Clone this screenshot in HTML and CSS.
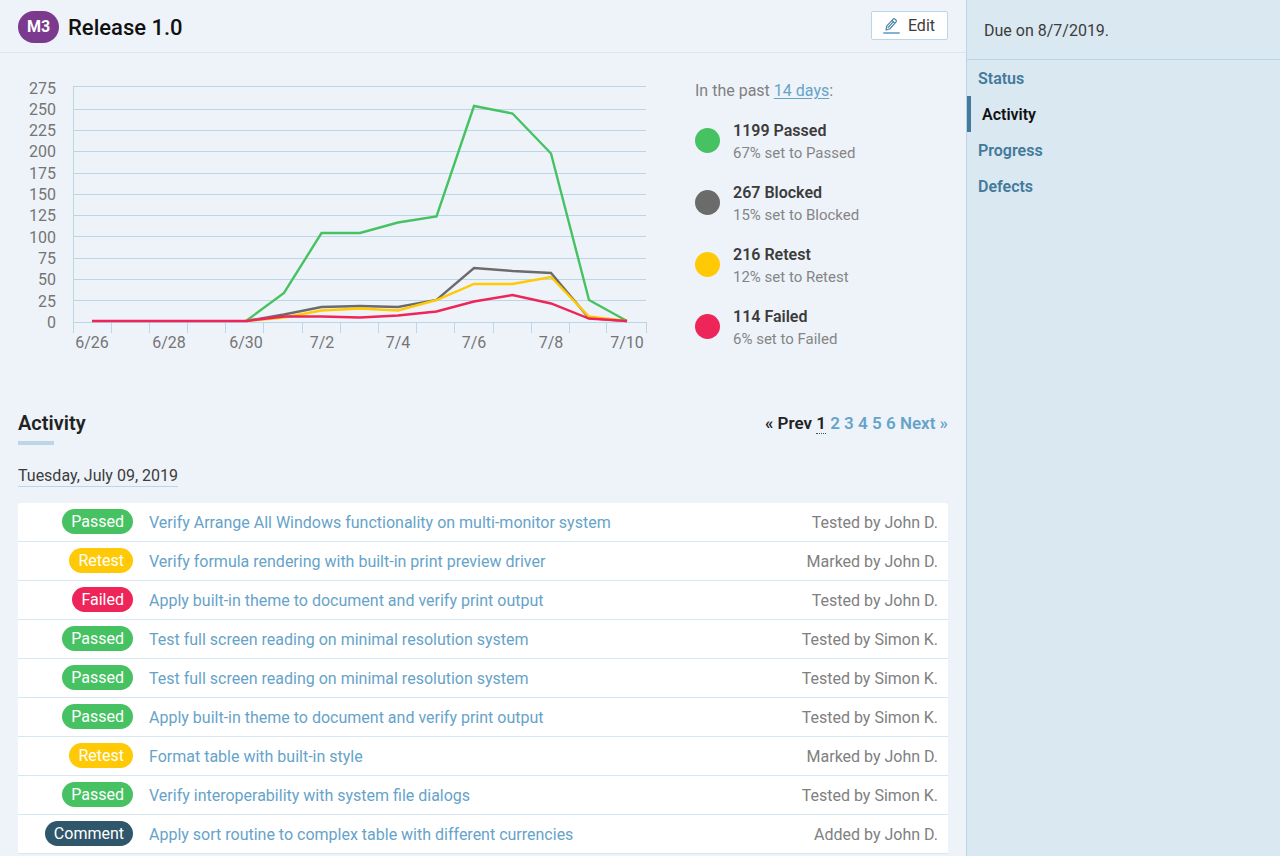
FILE: index.html
```html
<!DOCTYPE html>
<html lang="en">
<head>
<meta charset="utf-8">
<title>Release 1.0</title>
<link rel="stylesheet" href="styles.css">
</head>
<body>
<div class="page">
  <main class="main">
    <header class="topbar">
      <span class="milestone">M3</span>
      <h1 class="title">Release 1.0</h1>
      <button class="edit" type="button">
        <svg class="edit-icon" width="17" height="17" viewBox="0 0 17 17" fill="none" aria-hidden="true">
          <path d="M3.700 9.200 10.100 2.100c.5-.6 1.200-.6 1.700-.1l1.300 1.200c.5.5.5 1.100 0 1.700L6.700 12 3 13zM8.900 3.500l2.900 2.800M4.800 10.900 10 5.200" stroke="#4785ab" stroke-width="1.200" stroke-linejoin="round"/>
          <rect x="0" y="15" width="17" height="2" rx="1" fill="#84b3d2"/>
        </svg>
        Edit
      </button>
    </header>

    <section class="overview">
      <svg class="chart" viewBox="18 80 630 280" role="img" aria-label="Test results per day">
        <path class="grid" d="M73 86.500H646M73 109.500H646M73 130.500H646M73 151.500H646M73 173.500H646M73 194.500H646M73 215.500H646M73 236.500H646M73 258.500H646M73 279.500H646M73 300.500H646M73 322.500H647"/>
        <path class="grid" d="M73.500 86V333M111.500 322v11M149.500 322v11M187.500 322v11M225.500 322v11M263.500 322v11M302.500 322v11M340.500 322v11M378.500 322v11M416.500 322v11M454.500 322v11M493.500 322v11M531.500 322v11M569.500 322v11M606.500 322v11M646.500 322v11"/>
        <g class="y-labels">
          <text x="56" y="94">275</text><text x="56" y="115">250</text><text x="56" y="136">225</text><text x="56" y="157">200</text><text x="56" y="179">175</text><text x="56" y="200">150</text><text x="56" y="221">125</text><text x="56" y="243">100</text><text x="56" y="264">75</text><text x="56" y="285">50</text><text x="56" y="307">25</text><text x="56" y="328">0</text>
        </g>
        <g class="x-labels">
          <text x="92" y="348">6/26</text><text x="169" y="348">6/28</text><text x="246" y="348">6/30</text><text x="322" y="348">7/2</text><text x="398" y="348">7/4</text><text x="474" y="348">7/6</text><text x="551" y="348">7/8</text><text x="627" y="348">7/10</text>
        </g>
        <g class="series">
          <polyline stroke="#46c263" points="246,321 284,293 321.500,233 360,233 398,222.500 436.500,216.500 474,106 512.500,113.500 551,153.500 589,300 627,321"/>
          <polyline stroke="#6b6b6b" points="246,321 284,314.500 321.500,307 360,306 398,307 436.500,300 474,268 512.500,271 551,273 589,318 627,321"/>
          <polyline stroke="#ffca05" points="246,321 284,317.500 321.500,310.500 360,308.500 398,310.500 436.500,300 474,284 512.500,284 551,277 589,316.500 627,321"/>
          <polyline stroke="#ee2558" points="92,321 246,321 284,316.500 321.500,316.500 360,317.500 398,315.500 436.500,311.500 474,301.500 512.500,295 551,303.500 589,318.500 627,321"/>
        </g>
      </svg>
      <div class="legend">
        <p class="period">In the past <a href="#">14 days</a>:</p>
        <ul class="totals">
          <li class="total"><span class="dot passed"></span><div><strong>1199 Passed</strong><small>67% set to Passed</small></div></li>
          <li class="total"><span class="dot blocked"></span><div><strong>267 Blocked</strong><small>15% set to Blocked</small></div></li>
          <li class="total"><span class="dot retest"></span><div><strong>216 Retest</strong><small>12% set to Retest</small></div></li>
          <li class="total"><span class="dot failed"></span><div><strong>114 Failed</strong><small>6% set to Failed</small></div></li>
        </ul>
      </div>
    </section>

    <section class="activity">
      <div class="activity-head">
        <h2 class="heading">Activity</h2>
        <nav class="pager" aria-label="Pages">
          <span>« Prev</span> <span class="current">1</span> <a href="#">2</a> <a href="#">3</a> <a href="#">4</a> <a href="#">5</a> <a href="#">6</a> <a href="#">Next »</a>
        </nav>
      </div>
      <h3 class="day">Tuesday, July 09, 2019</h3>
      <table class="log">
        <tbody>
          <tr><td class="state"><span class="pill passed">Passed</span></td><td><a href="#">Verify Arrange All Windows functionality on multi-monitor system</a></td><td class="who">Tested by John D.</td></tr>
          <tr><td class="state"><span class="pill retest">Retest</span></td><td><a href="#">Verify formula rendering with built-in print preview driver</a></td><td class="who">Marked by John D.</td></tr>
          <tr><td class="state"><span class="pill failed">Failed</span></td><td><a href="#">Apply built-in theme to document and verify print output</a></td><td class="who">Tested by John D.</td></tr>
          <tr><td class="state"><span class="pill passed">Passed</span></td><td><a href="#">Test full screen reading on minimal resolution system</a></td><td class="who">Tested by Simon K.</td></tr>
          <tr><td class="state"><span class="pill passed">Passed</span></td><td><a href="#">Test full screen reading on minimal resolution system</a></td><td class="who">Tested by Simon K.</td></tr>
          <tr><td class="state"><span class="pill passed">Passed</span></td><td><a href="#">Apply built-in theme to document and verify print output</a></td><td class="who">Tested by Simon K.</td></tr>
          <tr><td class="state"><span class="pill retest">Retest</span></td><td><a href="#">Format table with built-in style</a></td><td class="who">Marked by John D.</td></tr>
          <tr><td class="state"><span class="pill passed">Passed</span></td><td><a href="#">Verify interoperability with system file dialogs</a></td><td class="who">Tested by Simon K.</td></tr>
          <tr><td class="state"><span class="pill comment">Comment</span></td><td><a href="#">Apply sort routine to complex table with different currencies</a></td><td class="who">Added by John D.</td></tr>
        </tbody>
      </table>
    </section>
  </main>

  <aside class="sidebar">
    <p class="due">Due on 8/7/2019.</p>
    <nav class="views" aria-label="Views">
      <a href="#">Status</a>
      <a class="active" href="#" aria-current="page">Activity</a>
      <a href="#">Progress</a>
      <a href="#">Defects</a>
    </nav>
  </aside>
</div>
</body>
</html>
```

FILE: styles.css
```css
* {
  box-sizing: border-box;
}

body {
  margin: 0;
  background: #eef3fa;
  color: #3c3c3c;
  font: 16px/20px Roboto, "Liberation Sans", sans-serif;
}

h1, h2, h3, p, ul {
  margin: 0;
  padding: 0;
}

a {
  color: #66a3c9;
  text-decoration: none;
}

.page {
  display: flex;
  min-height: 100vh;
}

.main {
  flex: 1;
  min-width: 0;
}

.topbar {
  display: flex;
  align-items: flex-start;
  gap: 9px;
  padding: 11px 18px 8px;
  border-bottom: 1px solid #d6e7f1;
}

.milestone {
  width: 41px;
  border-radius: 16px;
  background: #7b3a8e;
  color: #fff;
  font-weight: 700;
  line-height: 32px;
  text-align: center;
}

.title {
  flex: 1;
  color: #111;
  font-size: 22px;
  font-weight: 500;
  line-height: 33px;
}

.edit {
  display: flex;
  align-items: center;
  gap: 8px;
  height: 29px;
  padding: 0 12px 0 11px;
  border: 1px solid #bad6e7;
  border-radius: 2px;
  background: #fff;
  color: #3c3c3c;
  font: inherit;
}

.overview {
  display: flex;
  gap: 47px;
  padding: 27px 18px 0;
}

.chart {
  flex: 1;
  min-width: 0;
}

.grid {
  fill: none;
  stroke: #bad6e7;
}

.y-labels,
.x-labels {
  fill: #757575;
  font-size: 16px;
}

.y-labels {
  text-anchor: end;
}

.x-labels {
  text-anchor: middle;
}

.series {
  fill: none;
  stroke-width: 2.4;
}

.legend {
  flex: 0 0 253px;
  padding-top: 1px;
}

.period {
  color: #808080;
}

.period a {
  text-decoration: underline;
  text-underline-offset: 2px;
}

.totals {
  display: grid;
  gap: 18px;
  margin-top: 19px;
  list-style: none;
}

.total {
  display: flex;
  align-items: flex-start;
  gap: 13px;
}

.dot {
  width: 25px;
  height: 25px;
  margin-top: 8px;
  border-radius: 50%;
}

.total strong,
.total small {
  display: block;
  line-height: 22px;
}

.total strong {
  font-size: 16px;
  font-weight: 600;
}

.total small {
  color: #858585;
  font-size: 15px;
}

.passed {
  background: #46c263;
}

.blocked {
  background: #6b6b6b;
}

.retest {
  background: #ffca05;
}

.failed {
  background: #ee2558;
}

.comment {
  background: #2f566b;
}

.activity {
  padding: 50px 18px 0;
}

.activity-head {
  display: flex;
  justify-content: space-between;
  align-items: flex-start;
}

.heading {
  color: #222;
  font-size: 20px;
  font-weight: 600;
  line-height: 26px;
}

.heading::after {
  content: "";
  display: block;
  width: 36px;
  height: 4px;
  margin-top: 5px;
  background: #bad6e7;
}

.pager {
  color: #222;
  font-size: 17px;
  font-weight: 600;
  line-height: 26px;
}

.current {
  border-bottom: 1px dotted #2f566b;
}

.day {
  width: fit-content;
  margin: 21px 0 16px;
  border-bottom: 1px solid #bad6e7;
  font-size: 16px;
  font-weight: 400;
  line-height: 20px;
}

.log {
  width: 100%;
  border-radius: 3px 3px 0 0;
  border-spacing: 0;
  background: #fff;
}

.log td {
  height: 39px;
  padding: 2px 0 0;
  border-bottom: 1px solid #d6e7f1;
}

.log .state {
  width: 131px;
  padding: 0 16px 1px 0;
  text-align: right;
}

.pill {
  display: block;
  width: fit-content;
  margin-left: auto;
  padding: 0 9px;
  border-radius: 13px;
  color: #fff;
  line-height: 25px;
}

.log .who {
  padding-right: 10px;
  color: #808080;
  text-align: right;
}

.sidebar {
  flex: 0 0 314px;
  border-left: 1px solid #b8d5e8;
  background: #dae8f1;
}

.due {
  padding: 21px 17px 18px;
  border-bottom: 1px solid #b8d5e8;
}

.views a {
  display: block;
  padding: 2px 0 0 11px;
  color: #437a9b;
  font-weight: 600;
  line-height: 34px;
}

.views .active {
  border-left: 4px solid #437a9b;
  color: #111;
}
```
